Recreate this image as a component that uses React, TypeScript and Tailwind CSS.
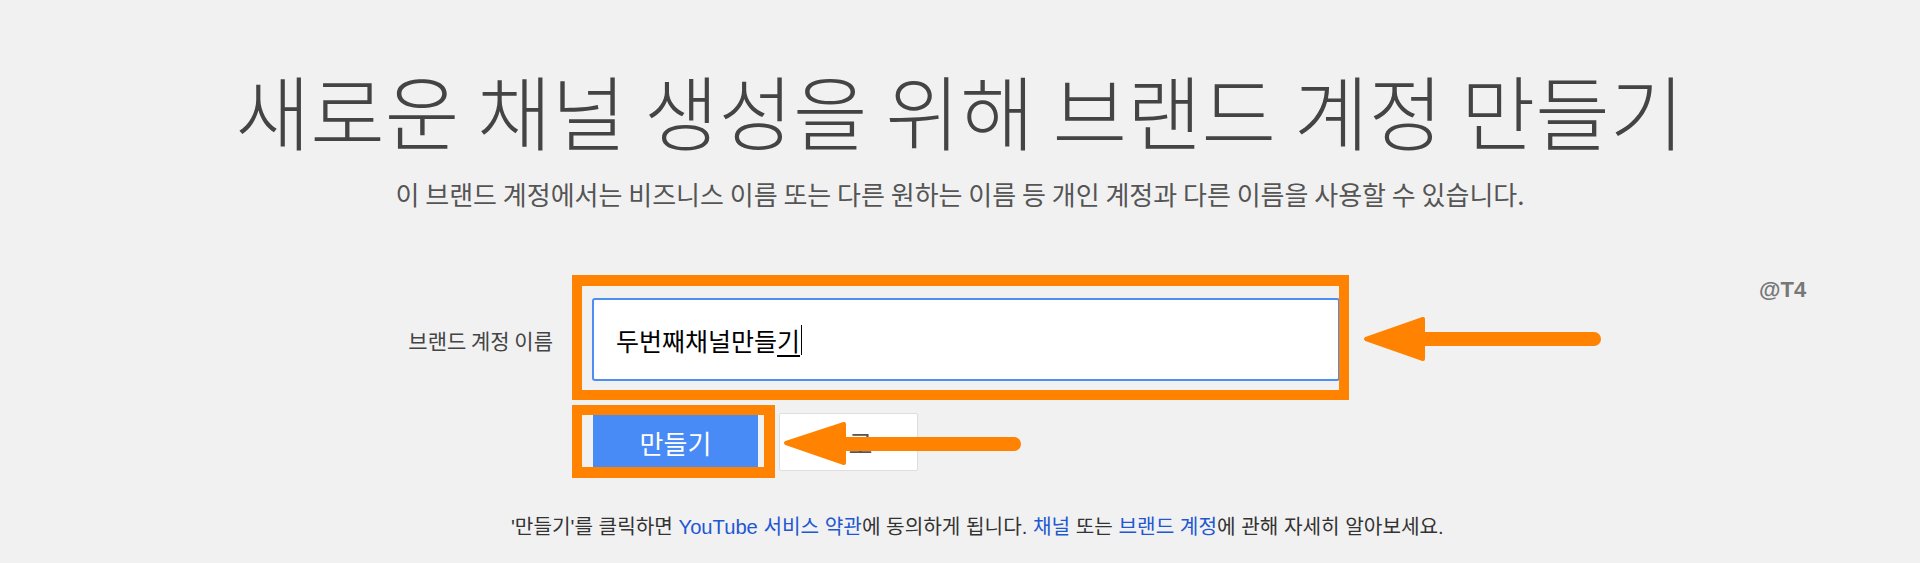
import React from "react";

export default function App() {
  return (
    <div className="relative w-full h-[563px] overflow-hidden bg-[#f1f1f1] font-['Noto_Sans_CJK_KR',sans-serif]">
      <div className="pt-[68px] text-center">
        <h1 className="text-[81px] leading-[81px] font-light text-[#444]">새로운 채널 생성을 위해 브랜드 계정 만들기</h1>
        <p className="mt-[32px] text-[26px] leading-[26px] text-[#555]">
          이 브랜드 계정에서는 비즈니스 이름 또는 다른 원하는 이름 등 개인 계정과 다른 이름을 사용할 수 있습니다.
        </p>
      </div>

      <div className="mt-[91px] flex items-center">
        <label className="w-[592px] shrink-0 pr-[39px] text-right text-[21px] leading-[24px] text-[#444]">
          브랜드 계정 이름
        </label>
        <div className="flex h-[83px] w-[748px] items-center rounded-[3px] border-2 border-[#4d8ef5] bg-white pl-[22px]">
          <span className="text-[25px] leading-[30px] text-black">
            두번째채널만들<span className="underline underline-offset-4">기</span>
          </span>
          <span className="ml-[1px] h-[30px] w-[1px] bg-black" />
        </div>
      </div>

      <div className="mt-[32px] flex gap-[21px] pl-[593px]">
        <button className="h-[58px] w-[165px] bg-[#488af6] text-[26px] text-white">만들기</button>
        <button className="h-[58px] w-[139px] rounded-[2px] border border-[#dedede] bg-white text-[26px] text-[#555]">뒤로</button>
      </div>

      <p className="mt-[46px] pl-[511px] font-['Liberation_Sans','Noto_Sans_CJK_KR',sans-serif] text-[20.2px] leading-[20px] text-[#333]">
        '만들기'를 클릭하면 <span className="text-[#2157d3]">YouTube 서비스 약관</span>에 동의하게 됩니다.{" "}
        <span className="text-[#2157d3]">채널</span> 또는 <span className="text-[#2157d3]">브랜드 계정</span>에 관해 자세히 알아보세요.
      </p>

      {/* annotation overlays */}
      <div className="pointer-events-none absolute left-[572px] top-[275px] h-[125px] w-[777px] border-[10px] border-t-[11px] border-[#ff8200]" />
      <div className="pointer-events-none absolute left-[572px] top-[405px] h-[73px] w-[203px] border-[10px] border-r-[11px] border-b-[11px] border-[#ff8200]" />
      <svg className="pointer-events-none absolute left-0 top-0" width="1920" height="563" viewBox="0 0 1920 563">
        <g fill="#ff8200" stroke="#ff8200" strokeLinejoin="round" strokeLinecap="round">
          <polygon points="1366,339 1423,319 1423,359" strokeWidth="4" />
          <line x1="1423" y1="339" x2="1594" y2="339" strokeWidth="14" />
          <polygon points="786,443 844,424 844,463" strokeWidth="4" />
          <line x1="844" y1="444" x2="1014" y2="444" strokeWidth="14" />
        </g>
      </svg>
      <div className="pointer-events-none absolute left-[1759px] top-[277px] font-['Liberation_Sans',sans-serif] text-[22px] font-bold leading-[26px] text-[#777]">
        @T4
      </div>
    </div>
  );
}
